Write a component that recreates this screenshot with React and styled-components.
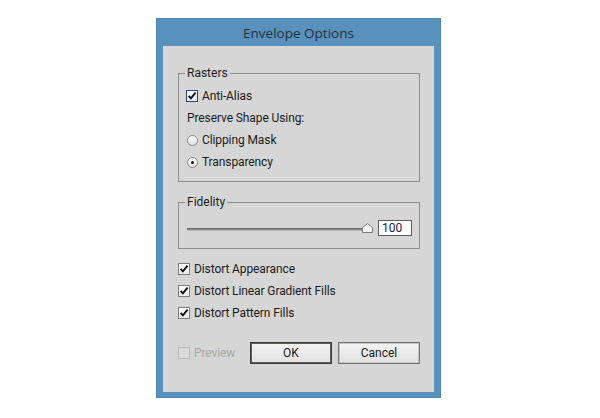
import React from "react";
import styled, { createGlobalStyle } from "styled-components";

const GlobalStyle = createGlobalStyle`
  body {
    margin: 0;
    background: #ffffff;
    font-family: Roboto, "Liberation Sans", sans-serif;
  }
`;

const Page = styled.div`
  padding: 18px 0 0 156px;
`;

const Window = styled.div`
  width: 285px;
  box-sizing: border-box;
  background: #5891be;
  border: 1px solid #4e87b4;
  padding: 0 6px 5px;
`;

const TitleBar = styled.div`
  height: 27px;
  display: flex;
  align-items: center;
  justify-content: center;
  font-family: "Open Sans", Roboto, sans-serif;
  font-size: 13.5px;
  color: #25303c;
`;

const Content = styled.div`
  background: #d6d6d6;
  padding: 19px 14px 28px 15px;
  display: flex;
  flex-direction: column;
  font-size: 12px;
  color: #1b1b1b;
`;

const Group = styled.fieldset`
  margin: 0 0 ${({ $gap }) => $gap || 0}px;
  padding: ${({ $pad }) => $pad};
  border: 1px solid #8d8d8d;
  min-width: 0;
`;

const Legend = styled.legend`
  padding: 0 2px;
  margin-left: -1px;
  line-height: 16px;
  font-size: 12px;
`;

const Row = styled.div`
  height: 22px;
  display: flex;
  align-items: center;
  gap: 4px;
  padding-left: ${({ $indent }) => $indent || 0}px;
  letter-spacing: -0.1px;
  color: ${({ $disabled }) => ($disabled ? "#a9a9a9" : "#1b1b1b")};
`;

const Box = styled.span`
  width: 12px;
  height: 12px;
  box-sizing: border-box;
  display: flex;
  align-items: center;
  justify-content: center;
  border: 1px solid
    ${({ $focused, $disabled }) =>
      $focused ? "#27418c" : $disabled ? "#b9b9b9" : "#7d7d7d"};
  background: ${({ $disabled }) =>
    $disabled ? "#dcdcdc" : "linear-gradient(#fdfdfd, #ebebeb)"};
`;

const Radio = styled.span`
  width: 11px;
  height: 11px;
  margin-left: 1px;
  box-sizing: border-box;
  border-radius: 50%;
  border: 1px solid #8b8b8b;
  background: linear-gradient(#fdfdfd, #e2e2e2);
  display: flex;
  align-items: center;
  justify-content: center;

  &::after {
    content: "";
    width: 3px;
    height: 3px;
    border-radius: 50%;
    background: #1a1a1a;
    display: ${({ $on }) => ($on ? "block" : "none")};
  }
`;

const SliderRow = styled.div`
  height: 22px;
  display: flex;
  align-items: center;
  padding-left: 1px;
`;

const Track = styled.div`
  flex: 1;
  height: 3px;
  margin-top: 2px;
  background: linear-gradient(#6a6a6a 0 1px, #8a8a8a 1px 2px, #b4b4b4 2px);
`;

const Thumb = styled.svg`
  width: 11px;
  height: 10px;
  margin-left: -3px;
  margin-top: -1px;
  flex: none;
`;

const ValueBox = styled.span`
  width: 34px;
  height: 16px;
  box-sizing: border-box;
  margin-left: 5px;
  border: 1px solid #5c5c5c;
  background: #ffffff;
  padding-left: 3px;
  line-height: 14px;
  color: #17184a;
`;

const Checks = styled.div`
  margin-top: 9px;
  display: flex;
  flex-direction: column;
`;

const Footer = styled.div`
  margin-top: 18px;
  display: flex;
  align-items: center;
  gap: 6px;
`;

const Button = styled.button`
  width: 82px;
  height: 22px;
  margin-left: ${({ $push }) => ($push ? "auto" : "0")};
  box-sizing: border-box;
  font-family: Roboto, "Liberation Sans", sans-serif;
  font-size: 12px;
  color: #1b1b1b;
  background: linear-gradient(#f3f3f3, #e2e2e2);
  border: 1px solid ${({ $primary }) => ($primary ? "#3b3b3b" : "#747474")};
  box-shadow: inset 0 0 0 1px
    ${({ $primary }) => ($primary ? "#5e5e5e" : "#c4c4c4")};
  padding: 0;
`;

const Check = () => (
  <svg width="10" height="10" viewBox="0 0 10 10">
    <path
      d="M1.6 4.8 L3.9 7.4 L8.6 1.6"
      fill="none"
      stroke="#111"
      strokeWidth="1.9"
    />
  </svg>
);

const CheckRow = ({ label, checked, focused, disabled }) => (
  <Row $disabled={disabled}>
    <Box $focused={focused} $disabled={disabled}>
      {checked && <Check />}
    </Box>
    {label}
  </Row>
);

const RadioRow = ({ label, on }) => (
  <Row>
    <Radio $on={on} />
    {label}
  </Row>
);

export default function App() {
  return (
    <Page>
      <GlobalStyle />
      <Window>
        <TitleBar>Envelope Options</TitleBar>
        <Content>
          <Group $pad="4px 7px 8px" $gap={12}>
            <Legend>Rasters</Legend>
            <CheckRow label="Anti-Alias" checked focused />
            <Row $indent={1}>Preserve Shape Using:</Row>
            <RadioRow label="Clipping Mask" />
            <RadioRow label="Transparency" on />
          </Group>

          <Group $pad="7px 7px 9px">
            <Legend>Fidelity</Legend>
            <SliderRow>
              <Track />
              <Thumb viewBox="0 0 11 10">
                <path
                  d="M0.5 9.5 V4.5 L5.5 0.6 L10.5 4.5 V9.5 Z"
                  fill="#f4f4f4"
                  stroke="#7a7a7a"
                />
              </Thumb>
              <ValueBox>100</ValueBox>
            </SliderRow>
          </Group>

          <Checks>
            <CheckRow label="Distort Appearance" checked />
            <CheckRow label="Distort Linear Gradient Fills" checked />
            <CheckRow label="Distort Pattern Fills" checked />
          </Checks>

          <Footer>
            <CheckRow label="Preview" disabled />
            <Button $primary $push>
              OK
            </Button>
            <Button>Cancel</Button>
          </Footer>
        </Content>
      </Window>
    </Page>
  );
}
